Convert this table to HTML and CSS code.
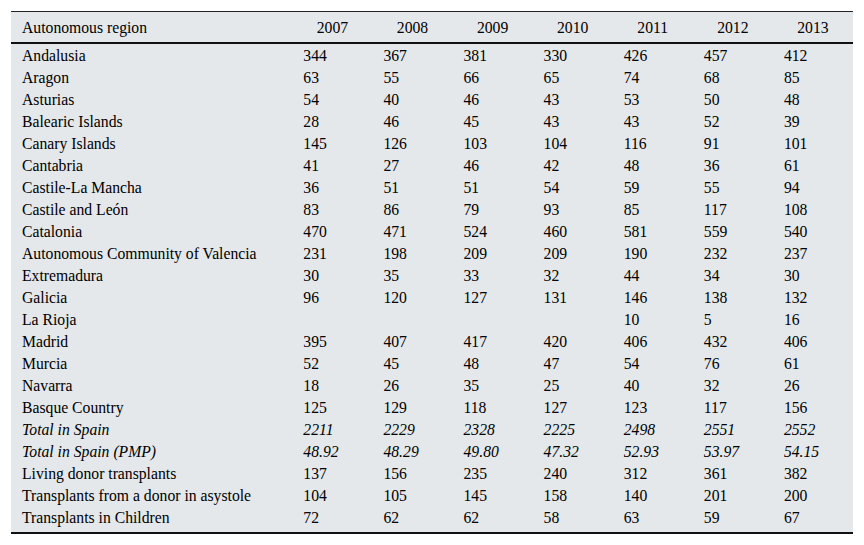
FILE: index.html
```html
<!DOCTYPE html>
<html>
<head>
<meta charset="utf-8">
<link rel="stylesheet" href="styles.css">
</head>
<body>
<table class="data">
<thead>
<tr><th class="region">Autonomous region</th><th>2007</th><th>2008</th><th>2009</th><th>2010</th><th>2011</th><th>2012</th><th>2013</th></tr>
</thead>
<tbody>
<tr><td>Andalusia</td><td>344</td><td>367</td><td>381</td><td>330</td><td>426</td><td>457</td><td>412</td></tr>
<tr><td>Aragon</td><td>63</td><td>55</td><td>66</td><td>65</td><td>74</td><td>68</td><td>85</td></tr>
<tr><td>Asturias</td><td>54</td><td>40</td><td>46</td><td>43</td><td>53</td><td>50</td><td>48</td></tr>
<tr><td>Balearic Islands</td><td>28</td><td>46</td><td>45</td><td>43</td><td>43</td><td>52</td><td>39</td></tr>
<tr><td>Canary Islands</td><td>145</td><td>126</td><td>103</td><td>104</td><td>116</td><td>91</td><td>101</td></tr>
<tr><td>Cantabria</td><td>41</td><td>27</td><td>46</td><td>42</td><td>48</td><td>36</td><td>61</td></tr>
<tr><td>Castile-La Mancha</td><td>36</td><td>51</td><td>51</td><td>54</td><td>59</td><td>55</td><td>94</td></tr>
<tr><td>Castile and León</td><td>83</td><td>86</td><td>79</td><td>93</td><td>85</td><td>117</td><td>108</td></tr>
<tr><td>Catalonia</td><td>470</td><td>471</td><td>524</td><td>460</td><td>581</td><td>559</td><td>540</td></tr>
<tr><td>Autonomous Community of Valencia</td><td>231</td><td>198</td><td>209</td><td>209</td><td>190</td><td>232</td><td>237</td></tr>
<tr><td>Extremadura</td><td>30</td><td>35</td><td>33</td><td>32</td><td>44</td><td>34</td><td>30</td></tr>
<tr><td>Galicia</td><td>96</td><td>120</td><td>127</td><td>131</td><td>146</td><td>138</td><td>132</td></tr>
<tr><td>La Rioja</td><td></td><td></td><td></td><td></td><td>10</td><td>5</td><td>16</td></tr>
<tr><td>Madrid</td><td>395</td><td>407</td><td>417</td><td>420</td><td>406</td><td>432</td><td>406</td></tr>
<tr><td>Murcia</td><td>52</td><td>45</td><td>48</td><td>47</td><td>54</td><td>76</td><td>61</td></tr>
<tr><td>Navarra</td><td>18</td><td>26</td><td>35</td><td>25</td><td>40</td><td>32</td><td>26</td></tr>
<tr><td>Basque Country</td><td>125</td><td>129</td><td>118</td><td>127</td><td>123</td><td>117</td><td>156</td></tr>
<tr class="total"><td>Total in Spain</td><td>2211</td><td>2229</td><td>2328</td><td>2225</td><td>2498</td><td>2551</td><td>2552</td></tr>
<tr class="total"><td>Total in Spain (PMP)</td><td>48.92</td><td>48.29</td><td>49.80</td><td>47.32</td><td>52.93</td><td>53.97</td><td>54.15</td></tr>
<tr><td>Living donor transplants</td><td>137</td><td>156</td><td>235</td><td>240</td><td>312</td><td>361</td><td>382</td></tr>
<tr><td>Transplants from a donor in asystole</td><td>104</td><td>105</td><td>145</td><td>158</td><td>140</td><td>201</td><td>200</td></tr>
<tr class="last"><td>Transplants in Children</td><td>72</td><td>62</td><td>62</td><td>58</td><td>63</td><td>59</td><td>67</td></tr>
</tbody>
</table>
</body>
</html>
```

FILE: styles.css
```css
html, body {
  margin: 0;
  padding: 0;
  background: #ffffff;
}

body {
  padding: 11px 0 0 11px;
}

.data {
  border-collapse: collapse;
  width: 842px;
  table-layout: fixed;
  background: #e4e8eb;
  font-family: "Liberation Serif", "Times New Roman", serif;
  font-size: 15.7px;
  color: #000;
  border-top: 1px solid #222;
  border-bottom: 2px solid #111;
}

.data thead tr {
  border-bottom: 2px solid #111;
}

.data th {
  font-weight: normal;
  height: 29px;
  padding: 1px 0 0 0;
  text-align: center;
  width: 80px;
  vertical-align: middle;
}

.data th.region {
  width: 281px;
  text-align: left;
  padding-left: 11px;
  box-sizing: border-box;
}

.data td {
  height: 21px;
  padding: 1px 0 0 11px;
  line-height: 21px;
  white-space: nowrap;
  vertical-align: middle;
}

.data tr.total td {
  font-style: italic;
}

.data tr.last td {
  height: 25px;
  vertical-align: top;
}
```
